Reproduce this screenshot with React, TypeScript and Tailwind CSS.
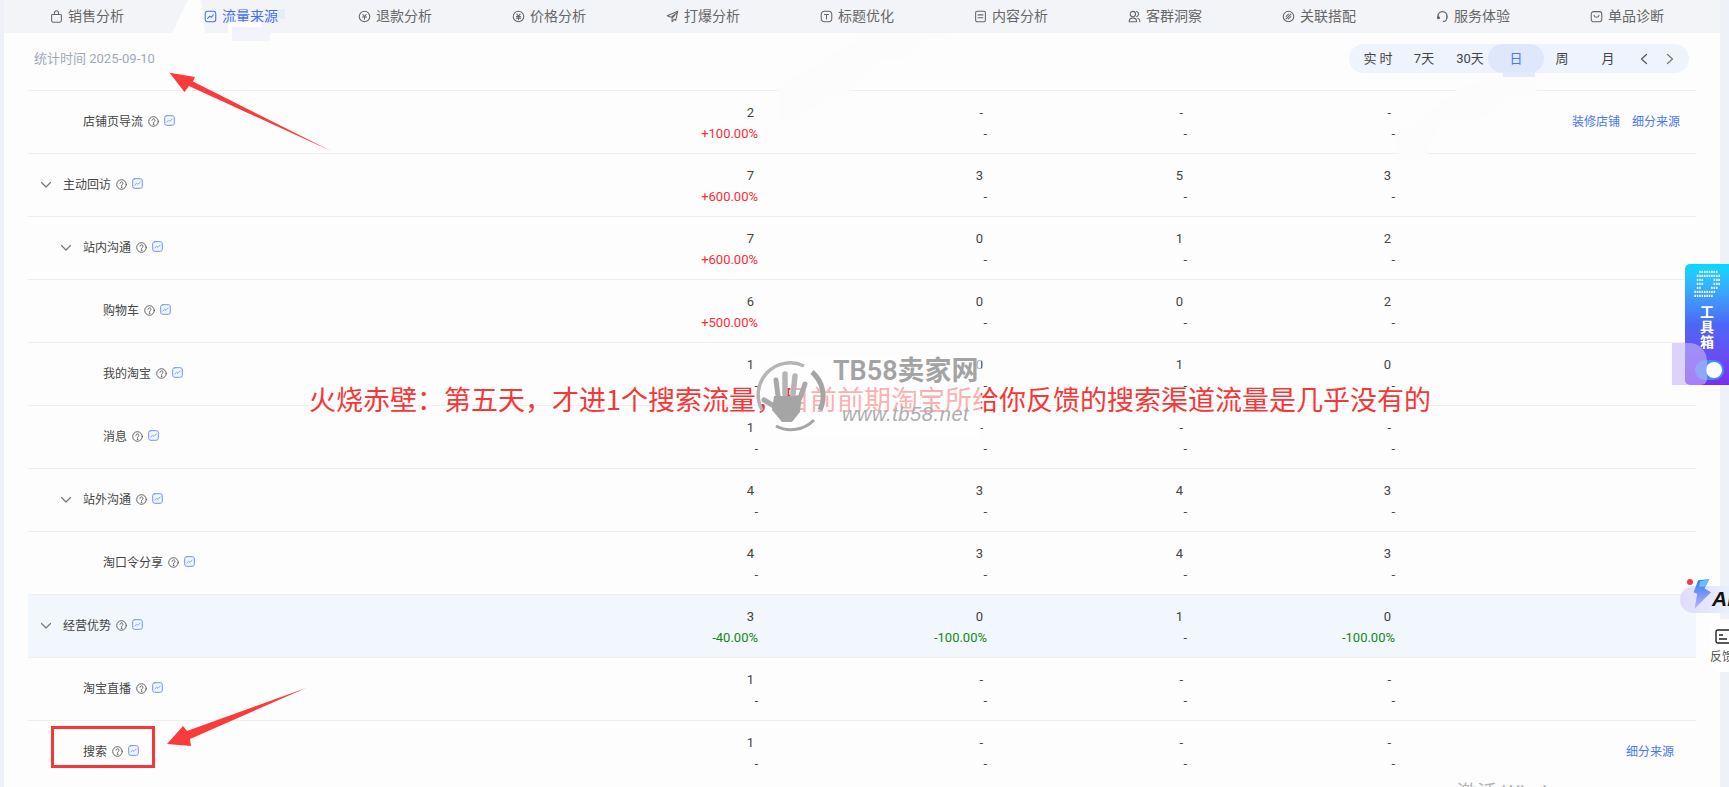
import React from "react";

const S = ({ children, size = 13 }: { children: React.ReactNode; size?: number }) => (
  <svg width={size} height={size} viewBox="0 0 16 16" fill="none" stroke="currentColor" strokeWidth="1.3" strokeLinecap="round" strokeLinejoin="round" className="shrink-0">
    {children}
  </svg>
);

const tabIcons: React.ReactNode[] = [
  <S key="0"><path d="M3 5.5h10a1 1 0 0 1 1 1V13a2 2 0 0 1-2 2H4a2 2 0 0 1-2-2V6.500a1 1 0 0 1 1-1z" /><path d="M5.500 5.500V3.500a2.500 2.500 0 0 1 5 0v2" /></S>,
  <S key="1"><rect x="1.500" y="1.500" width="13" height="13" rx="3" /><path d="M4.500 10.500 7 7.500l2 1.500 2.500-3" /></S>,
  <S key="2"><circle cx="8" cy="8" r="6.500" /><path d="M6 5.500 8 8l2-2.500M5.500 8.500h5M8 8v3.500" /></S>,
  <S key="3"><circle cx="8" cy="8" r="6.500" /><path d="M6 5 8 7.500 10 5M5.500 8h5M5.500 10h5M8 7.500V12" /></S>,
  <S key="4"><path d="M14.500 1.500 1.500 7l4.500 2 7-5-5.500 6v4.500l2.500-3 2 1z" /></S>,
  <S key="5"><rect x="1.500" y="1.500" width="13" height="13" rx="4" /><path d="M5.500 5.500h5M8 5.500v5.500" /></S>,
  <S key="6"><rect x="2" y="1.500" width="12" height="13" rx="2" /><path d="M5 6h6M5 9.500h6" /></S>,
  <S key="7"><circle cx="6" cy="5" r="3.300" /><path d="M1.500 14.500v-1.500a4 4 0 0 1 4-3h1a4 4 0 0 1 4 3v1.500zM10.500 1.800a3.300 3.300 0 0 1 0 6.400M12 10.200c1.500.5 2.500 1.500 2.500 3v1.300" /></S>,
  <S key="8"><circle cx="8" cy="8" r="6.500" /><path d="m5 11 6-6M5 8l3-3M8 11l3-3" /></S>,
  <S key="9"><path d="M2.500 10V7.500a5.500 5.500 0 0 1 11 0V10" strokeWidth="1.800" /><circle cx="3" cy="9.500" r="1.300" fill="currentColor" /><path d="M13 10.500c0 2.500-2 3.500-4 3.500" /></S>,
  <S key="10"><rect x="1.500" y="2" width="13" height="12.500" rx="3" /><path d="M5 6.500c.5 2 1.500 2.500 3 2.500s2.500-.5 3-2.500" /></S>,
];

const tabs = ["销售分析", "流量来源", "退款分析", "价格分析", "打爆分析", "标题优化", "内容分析", "客群洞察", "关联搭配", "服务体验", "单品诊断"];

const periods = ["实 时", "7天", "30天", "日", "周", "月"];

type Row = {
  label: string;
  level: 1 | 2 | 3;
  chevron?: boolean;
  cols: [string, string][];
  links?: string[];
  linkPad?: string;
  highlight?: boolean;
};

const d: [string, string] = ["-", "-"];
const rows: Row[] = [
  { label: "店铺页导流", level: 2, cols: [["2", "+100.00%"], d, d, d], links: ["装修店铺", "细分来源"], linkPad: "pr-[16px]" },
  { label: "主动回访", level: 1, chevron: true, cols: [["7", "+600.00%"], ["3", "-"], ["5", "-"], ["3", "-"]] },
  { label: "站内沟通", level: 2, chevron: true, cols: [["7", "+600.00%"], ["0", "-"], ["1", "-"], ["2", "-"]] },
  { label: "购物车", level: 3, cols: [["6", "+500.00%"], ["0", "-"], ["0", "-"], ["2", "-"]] },
  { label: "我的淘宝", level: 3, cols: [["1", "-"], ["0", "-"], ["1", "-"], ["0", "-"]] },
  { label: "消息", level: 3, cols: [["1", "-"], d, d, d] },
  { label: "站外沟通", level: 2, chevron: true, cols: [["4", "-"], ["3", "-"], ["4", "-"], ["3", "-"]] },
  { label: "淘口令分享", level: 3, cols: [["4", "-"], ["3", "-"], ["4", "-"], ["3", "-"]] },
  { label: "经营优势", level: 1, chevron: true, highlight: true, cols: [["3", "-40.00%"], ["0", "-100.00%"], ["1", "-"], ["0", "-100.00%"]] },
  { label: "淘宝直播", level: 2, cols: [["1", "-"], d, d, d] },
  { label: "搜索", level: 2, cols: [["1", "-"], d, d, d], links: ["细分来源"], linkPad: "pr-[22px]" },
];

const Help = () => (
  <svg width="11" height="11" viewBox="0 0 11 11" fill="none" stroke="#555" strokeWidth="0.9" strokeLinecap="round" className="shrink-0">
    <circle cx="5.500" cy="5.500" r="4.800" />
    <path d="M4 4.300a1.500 1.500 0 1 1 2.300 1.300c-.6.400-.8.700-.8 1.200" />
    <circle cx="5.500" cy="8.200" r="0.300" />
  </svg>
);

const Trend = () => (
  <svg width="11" height="11" viewBox="0 0 11 11" fill="#f3f6ff" stroke="#6f95f6" strokeLinecap="round" className="shrink-0">
    <rect x="0.700" y="0.700" width="9.600" height="9.600" rx="2" strokeWidth="1" />
    <path d="M2.800 7 4.500 5.300 6 6.300 8.200 4" strokeWidth="0.900" fill="none" />
  </svg>
);

const Chevron = () => (
  <svg width="12" height="8" viewBox="0 0 12 8" fill="none" stroke="#777" strokeWidth="1.200" strokeLinecap="round" strokeLinejoin="round" className="shrink-0">
    <path d="M1.500 1.500 6 6l4.500-4.500" />
  </svg>
);

const pad = { 1: "pl-[12px]", 2: "pl-[32px]", 3: "pl-[75px]" };
const padNoChevron = { 1: "pl-[35px]", 2: "pl-[55px]", 3: "pl-[75px]" };

const Cell = ({ v }: { v: [string, string] }) => {
  const tone = v[1].startsWith("+") ? "text-[#fb2c36]" : v[1].length > 1 ? "text-[#128a12]" : "text-[#444]";
  return (
    <div className="flex flex-col items-end text-[13px] leading-[21px] text-[#444] mt-[1px]">
      <div className="pr-[4px]">{v[0]}</div>
      <div className={tone}>{v[1]}</div>
    </div>
  );
};

const TableRow = ({ row }: { row: Row }) => (
  <div className={`grid grid-cols-[300px_430px_229px_200px_208px_1fr] items-center h-[63px] border-t border-[#efeff1] ${row.highlight ? "bg-[#f2f6fd]" : ""}`}>
    <div className={`flex items-center text-[12px] text-[#444] ${row.chevron ? pad[row.level] : padNoChevron[row.level]}`}>
      {row.chevron && (
        <span className="mr-[11px] flex">
          <Chevron />
        </span>
      )}
      <span className="mr-[5px]">{row.label}</span>
      <span className="mr-[5px] flex -mt-[2px]"><Help /></span>
      <span className="flex -mt-[3px]"><Trend /></span>
    </div>
    {row.cols.map((c, i) => (
      <Cell key={i} v={c} />
    ))}
    <div className={`flex justify-end gap-[12px] text-[12px] text-[#4a78f0] ${row.linkPad ?? ""}`}>
      {row.links?.map((l) => <span key={l}>{l}</span>)}
    </div>
  </div>
);

const pDots = [
  "..########.",
  ".##########",
  ".###....###",
  ".###....###",
  ".##....###.",
  "#########..",
  "########...",
];

const Toolbox = () => (
  <div className="absolute right-0 top-[264px] w-[44px] h-[121px] rounded-l-[5px] bg-gradient-to-b from-[#00d9ff] via-[#4b67f5] to-[#7a2cf0] flex flex-col items-center pt-[6px]">
    <svg width="27" height="28" viewBox="0 0 27 28">
      {pDots.map((r, y) =>
        r.split("").map((c, x) =>
          c === "#" ? <rect key={`${x}-${y}`} x={x * 2.4 + 0.4} y={y * 4 + 0.8} width="1.500" height="2.200" fill="#fff" /> : null
        )
      )}
    </svg>
    <div className="mt-[7px] text-[14px] leading-[15px] font-bold text-white w-[14px] text-center">工具箱</div>
    <div className="absolute left-[10px] top-[96px] w-[29px] h-[20px] rounded-full bg-[#3d8ff7] flex items-center justify-end pr-[2px]">
      <div className="w-[16px] h-[16px] rounded-full bg-white" />
    </div>
  </div>
);

const AiBadge = () => (
  <div className="absolute right-0 top-[586px] w-[49px] h-[27px] rounded-l-full bg-gradient-to-r from-[#e0dafc] to-[#e8f0fe] overflow-visible">
    <span className="absolute left-[32px] top-[-2px] text-[21px] leading-[30px] font-bold italic text-[#111] font-['Liberation_Sans',sans-serif] whitespace-nowrap">AI</span>
    <svg className="absolute left-[9px] top-[-9px]" width="22" height="34" viewBox="0 0 24 34">
      <defs>
        <linearGradient id="bolt" x1="0" y1="0" x2="0" y2="1">
          <stop offset="0" stopColor="#2e7cf6" />
          <stop offset="1" stopColor="#c0b0fb" />
        </linearGradient>
      </defs>
      <path d="M10 2 22 1 17 11 24 15 6 33 9 17 5 15z" fill="url(#bolt)" />
      <path d="M12 3 22 1 18 9 11 9z" fill="#67c0f8" />
    </svg>
    <div className="absolute left-[7px] top-[-7px] w-[6px] h-[6px] rounded-full bg-[#f43a40]" />
  </div>
);

const Feedback = () => (
  <div className="absolute right-0 top-[619px] w-[20px] h-[53px] rounded-l-[12px] bg-white overflow-hidden text-[#555]">
    <svg className="absolute left-[6px] top-[10px]" width="18" height="16" viewBox="0 0 18 16" fill="none" stroke="#222" strokeWidth="1.400">
      <rect x="1" y="1" width="15" height="13" rx="2" />
      <path d="M4 6h4M4 10h8" />
    </svg>
    <div className="absolute left-[1px] top-[30px] text-[12px] leading-[16px] whitespace-nowrap">反馈</div>
  </div>
);

const Watermark = () => (
  <div className="absolute left-[745px] top-[358px] w-[236px] h-[80px] pointer-events-none">
    <div className="absolute inset-[0px] left-[45px] bg-white/60" />
    <svg className="absolute left-[7px] top-[0px]" width="78" height="76" viewBox="0 0 78 76" fill="none">
      <path d="M10 52A32 32 0 0 1 52 8" stroke="#b5b5b5" strokeWidth="3.500" />
      <path d="M60 14A32 32 0 0 1 68 52" stroke="#a5a5a5" strokeWidth="5" />
      <path d="M24 68A32 32 0 0 0 62 62" stroke="#a5a5a5" strokeWidth="3" />
      <g stroke="#a8a8a8" strokeLinecap="round">
        <path d="M26 38 24 22" strokeWidth="5" />
        <path d="M33 36 33 16" strokeWidth="5.500" stroke="#b5b5b5" />
        <path d="M41 36 43 18" strokeWidth="5.500" stroke="#b5b5b5" />
        <path d="M48 40 53 26" strokeWidth="5" />
        <path d="M22 48 12 42" strokeWidth="5" />
      </g>
      <path d="M22 38h28l-2 16-8 10H30L20 52z" fill="#a5a5a5" />
    </svg>
    <div className="absolute left-[88px] top-[-3px] text-[27px] leading-[32px] font-semibold text-[#a3a3a3] whitespace-nowrap">TB58卖家网</div>
    <div className="absolute left-[97px] top-[44px] text-[20px] leading-[24px] italic text-[#adadad] whitespace-nowrap tracking-[0.6px] font-['Liberation_Sans',sans-serif]">www.tb58.net</div>
  </div>
);

export default function App() {
  return (
    <div className="relative w-[1729px] h-[787px] overflow-hidden bg-[#eff1f8] pl-[4px] pr-[9px] font-['Roboto','Noto_Sans_CJK_SC',sans-serif]">
      <div className="h-full bg-[#fdfdfd]">
        <div className="flex h-[33px] bg-[#f3f4f8] pl-[6px]">
          {tabs.map((t, i) => (
            <div key={t} className={`w-[154px] flex items-center justify-center gap-[5px] text-[14px] ${i === 1 ? "text-[#3f6ff0]" : "text-[#666]"}`}>
              {tabIcons[i]}
              <span>{t}</span>
            </div>
          ))}
        </div>
        <div className="flex items-center justify-between h-[57px] pl-[30px] pr-[31px] pb-[6px]">
          <span className="text-[13px] text-[#a0a8b8]">统计时间 2025-09-10</span>
          <div className="flex items-center h-[29px] rounded-full bg-[#eef3fe] pl-[6px] pr-[6px] text-[13px] text-[#444]">
            {periods.map((p) => (
              <div key={p} className={`w-[46px] h-[29px] flex items-center justify-center ${p === "日" ? "bg-[#dfe7fd] rounded-full text-[#4a78f0] w-[56px] -mx-[5px]" : ""}`}>
                {p}
              </div>
            ))}
            <div className="flex w-[52px] justify-around text-[#555]">
              <svg width="10" height="12" viewBox="0 0 10 12" fill="none" stroke="#555" strokeWidth="1.200" strokeLinecap="round" strokeLinejoin="round"><path d="M7.500 1.500 2.500 6l5 4.500" /></svg>
              <svg width="10" height="12" viewBox="0 0 10 12" fill="none" stroke="#777" strokeWidth="1.200" strokeLinecap="round" strokeLinejoin="round"><path d="M2.500 1.500 7.500 6l-5 4.500" /></svg>
            </div>
          </div>
        </div>
        <div className="ml-[24px] mr-[24px]">
          {rows.map((r) => (
            <TableRow key={r.label} row={r} />
          ))}
        </div>
      </div>

      {/* erased smudges */}
      <svg className="absolute left-0 top-0 pointer-events-none" width="1729" height="787">
        <path d="M188 0 H201 L205 33 H172 Z" fill="#fdfdfd" />
        <path d="M228 22 H262 V33 H300 L292 40 H228 Z" fill="#fdfdfd" />
        <rect x="278" y="9" width="7" height="10" fill="#e6ecfb" />
        <rect x="232" y="27" width="38" height="14" fill="#f3f4fb" />
        <path d="M870 33 H950 V38 H925 L905 58 H880 L845 95 H830 L795 120 H778 V88 Z" fill="#fcfcfc" />
        <path d="M1500 76 H1537 V96 H1510 L1480 120 H1440 L1425 160 H1400 L1396 140 L1460 88 Z" fill="#fcfcfc" />
        <rect x="1503" y="72" width="32" height="5" fill="#e3eafd" />
      </svg>

      <div className="absolute left-[309px] top-[381px] whitespace-nowrap text-[27px] leading-[36px] text-[#f63737] font-['Noto_Sans_CJK_SC',sans-serif]">
        火烧赤壁：第五天，才进1个搜索流量，目前前期淘宝所给你反馈的搜索渠道流量是几乎没有的
      </div>
      <Watermark />

      <svg className="absolute left-0 top-0 pointer-events-none" width="1729" height="787">
        <path d="M169.500 72.700 195 77 193 81.500 331 151 189 86 184.500 92Z" fill="#fb3a3a" />
        <path d="M167 744 183 726 187 731 306 688 190 739 191 746Z" fill="#fb3a3a" />
        <rect x="52.500" y="727.500" width="101" height="39" fill="none" stroke="#f63737" strokeWidth="3" />
      </svg>

      <div className="absolute left-[1457px] top-[779px] text-[20px] leading-[28px] text-[#b5b5b5] whitespace-nowrap">激活 Windows</div>

      <Toolbox />
      <div className="absolute left-[1672px] top-[343px] w-[35px] h-[42px] rounded-tr-[18px] rounded-br-[6px] bg-[#c8b6f8]/60 pointer-events-none" />
      <AiBadge />
      <Feedback />
    </div>
  );
}
